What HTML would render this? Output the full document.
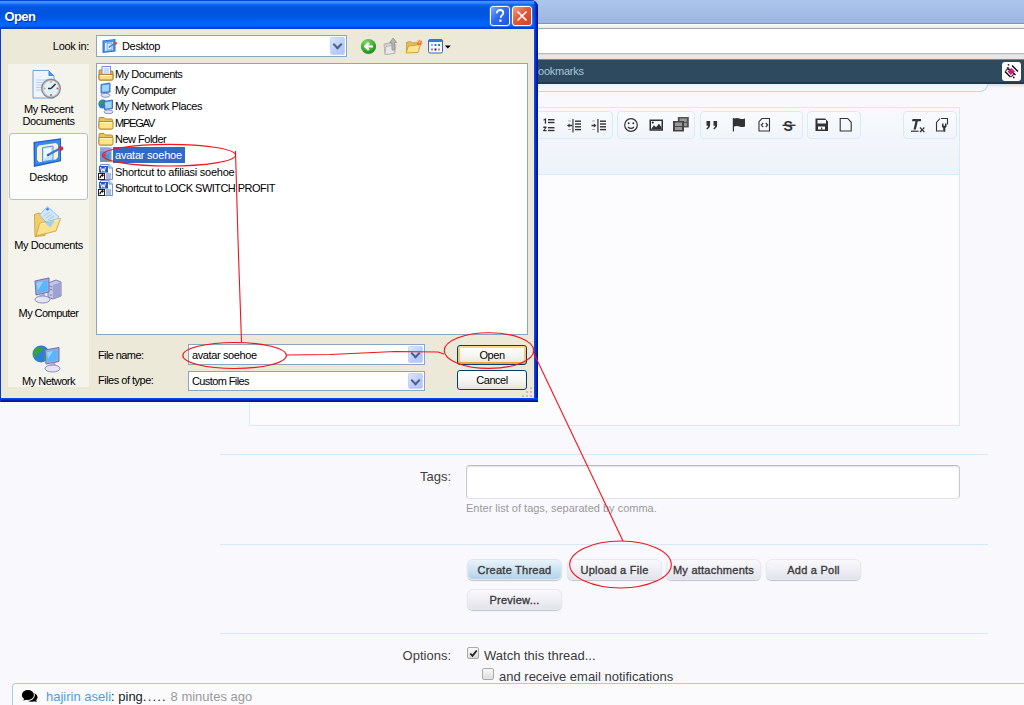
<!DOCTYPE html>
<html><head><meta charset="utf-8">
<style>
*{box-sizing:border-box;margin:0;padding:0}
html,body{width:1024px;height:705px;overflow:hidden;background:#f9f9fd;font-family:"Liberation Sans",sans-serif;position:relative}
.a{position:absolute}
/* web page */
#topblue{left:0;top:0;width:1024px;height:24px;background:linear-gradient(#adc6ec,#9cb6e0);border-bottom:1px solid #7e96bf}
#bar1{left:0;top:24px;width:1024px;height:5px;background:linear-gradient(#fdfdfd,#eaeaea);border-bottom:1px solid #a9a9a9}
#bar2{left:0;top:29px;width:1024px;height:24px;background:#fff}
#bar3{left:0;top:53px;width:1024px;height:6px;background:linear-gradient(#d6d6d6,#e9e9e9 30%,#e4e4e4);border-top:1px solid #bdbdbd}
#nav{left:0;top:59px;width:1024px;height:25px;background:#2d4a5f;border-top:1px solid #5b8cae;border-bottom:2px solid #1f3a4e}
#nav span{position:absolute;left:531px;top:5px;font-size:11px;letter-spacing:-0.25px;color:#a9c6dc}
#navicon{left:1002px;top:62px;width:19px;height:19px;background:#fff;border-radius:3px}
#navshadow{left:0;top:84px;width:1024px;height:4px;background:linear-gradient(#d9dde2,#f9f9fd)}
#panel{left:-20px;top:84px;width:1008px;height:8px;border:1px solid #bcd6ea;border-top:none;border-radius:0 0 9px 9px;background:linear-gradient(#eef0f3,#fbfbfd)}
#editor{left:249px;top:107px;width:711px;height:319px;border:1px solid #d8e9f7;background:#fcfcfe}
#toolbar{left:0;top:0;width:709px;height:67px;background:linear-gradient(#f7f9fd,#edf3fa);border-bottom:1px solid #d8e9f7}
.grp{position:absolute;top:3px;height:28px;border:1px solid #dbeaf7;border-radius:4px;background:linear-gradient(#f9fbfe,#f0f5fb)}
.sep{position:absolute;left:220px;width:768px;height:1px;background:#d6e9f8}
.lbl{position:absolute;font-size:13px;color:#404040;text-align:right}
#tags{left:466px;top:465px;width:494px;height:34px;background:#fff;border:1px solid #cbcbce;border-top-color:#bababd;border-bottom-color:#e2e2e6;border-radius:4px;box-shadow:inset 0 1px 2px #e4e4e4}
#hint{left:466px;top:502px;font-size:11px;color:#9a9a9a}
.btn{position:absolute;top:559px;width:95px;height:21px;border-radius:6px;background:linear-gradient(#fafafd,#e3e3ec);box-shadow:0 1px 1px #bfc0cc;border:1px solid #e8e8f0;font-size:11px;font-weight:normal;-webkit-text-stroke:0.35px #3a3a3a;letter-spacing:0.25px;color:#3a3a3a;text-align:center;line-height:19px;padding-top:1px}
.cb{position:absolute;width:12px;height:12px;border:1px solid #a9a9a9;border-radius:2px;background:linear-gradient(#fafafa,#dcdcdc)}
#chat{left:12px;top:683px;width:1020px;height:30px;border:1px solid #a9cbe6;border-right:none;border-radius:4px 0 0 0;background:#fbfbfd}

#dlg{left:0;top:0;width:538px;height:402px;background:#0831d9;border-radius:0 7px 0 0;overflow:hidden}
#title{left:0;top:0;width:538px;height:29px;background:linear-gradient(#0846d6 0px,#0846d6 1px,#3d95ff 1px,#3a90fd 2.5px,#0a62ee 5px,#0056e2 8px,#0053de 15px,#005bec 19px,#0064fa 22px,#0063f6 26px,#0046d2 27.5px,#0040c8 29px)}
#title span{position:absolute;left:4.5px;top:9px;font-size:13px;font-weight:bold;color:#fff;text-shadow:1px 1px 0 #0a2a90;letter-spacing:-0.6px}
.tbtn{position:absolute;top:6px;width:20px;height:20px;border:1px solid #fff;border-radius:3px;box-shadow:0 0 0 0.5px #6b8fd8}
.tbtn svg{position:absolute;left:0;top:0}
#body{left:1px;top:29px;width:533px;height:369px;background:#ece9d8;font-size:11px;color:#000}

.dl{position:absolute;font-size:11px;color:#000;white-space:nowrap;letter-spacing:-0.4px}
.combo{position:absolute;background:#fff;border:1px solid #8aa4c2}
.ddb{position:absolute;width:15px;height:18px;border-radius:2px;background:linear-gradient(135deg,#dfe8fe,#b8ccf8 60%,#b1c6f6);border:1px solid #c3d3fd}
.ddb:after{content:"";position:absolute;left:3px;top:3px;width:5px;height:5px;border-right:2px solid #4d6185;border-bottom:2px solid #4d6185;transform:rotate(45deg)}
#places{left:8px;top:64px;width:81px;height:323px;background:#f4f3ec}
#list{left:96px;top:63px;width:432px;height:272px;background:#fff;border:1px solid #8aa4c2}
.xpbtn{position:absolute;width:70px;height:20px;border:1px solid #003c74;border-radius:3px;background:linear-gradient(#fff,#f4f4f0 60%,#e6e3d8);font-size:11px;text-align:center;line-height:18px;color:#000;letter-spacing:-0.45px}
.li{position:absolute;font-size:11px;line-height:16px;height:16px;white-space:nowrap;letter-spacing:-0.55px;color:#000}
.pl{position:absolute;left:0;width:81px;text-align:center;font-size:11px;line-height:12px;letter-spacing:-0.5px;color:#000;white-space:nowrap}
#places{overflow:hidden}
</style></head><body>
<div id="topblue" class="a"></div>
<div id="bar1" class="a"></div>
<div id="bar2" class="a"></div>
<div id="bar3" class="a"></div>
<div id="nav" class="a"><span>Bookmarks</span></div>
<div id="navicon" class="a"></div>
<div id="navshadow" class="a"></div>
<div id="panel" class="a"></div>

<div id="editor" class="a">
  <div id="toolbar" class="a">
    <div class="grp" style="left:200px;width:163px"></div>
    <div class="grp" style="left:367px;width:78px"></div>
    <div class="grp" style="left:450px;width:103px"></div>
    <div class="grp" style="left:557px;width:54px"></div>
    <div class="grp" style="left:653px;width:54px"></div>
  </div>
</div>


<svg class="a" style="left:0;top:0" width="1024" height="200" viewBox="0 0 1024 200">
 <g fill="#333" stroke="none">
  <!-- numbered list -->
  <path d="M543.5 119.5l1.6-1h1v5.2h-1.3v-3.6l-1.3.6z"/>
  <rect x="548" y="119" width="6.5" height="1.4"/><rect x="548" y="121.8" width="6.5" height="1.4"/>
  <path d="M543.3 126.6h3.2v1.2l-1.8 2.2h1.9v1.3h-3.4v-1.1l1.8-2.3h-1.7z"/>
  <rect x="548" y="127" width="6.5" height="1.4"/><rect x="548" y="129.8" width="6.5" height="1.4"/>
  <!-- outdent -->
  <rect x="572" y="119" width="1.8" height="13.5" fill="#777"/>
  <path d="M567 125.5l2.6-2v1.3h2.4v1.4h-2.4v1.3z"/>
  <rect x="575" y="120.5" width="6" height="1.4"/><rect x="575" y="123.3" width="6" height="1.4"/><rect x="575" y="126.1" width="6" height="1.4"/><rect x="575" y="128.9" width="6" height="1.4"/>
  <rect x="568" y="120.5" width="3" height="1" fill="#aaa"/><rect x="568" y="129" width="3" height="1" fill="#aaa"/>
  <!-- indent -->
  <rect x="597" y="119" width="1.8" height="13.5" fill="#777"/>
  <path d="M596.5 125.5l-2.6-2v1.3h-2.4v1.4h2.4v1.3z"/>
  <rect x="600" y="120.5" width="6" height="1.4"/><rect x="600" y="123.3" width="6" height="1.4"/><rect x="600" y="126.1" width="6" height="1.4"/><rect x="600" y="128.9" width="6" height="1.4"/>
  <rect x="592" y="120.5" width="3" height="1" fill="#aaa"/><rect x="592" y="129" width="3" height="1" fill="#aaa"/>
 </g>
 <g fill="none" stroke="#333">
  <!-- smiley -->
  <circle cx="631" cy="125" r="6.3" stroke-width="1.2"/>
  <path d="M628 127q3 2.8 6 0" stroke-width="1.3"/>
 </g>
 <g fill="#333">
  <circle cx="628.7" cy="123.3" r="1"/><circle cx="633.3" cy="123.3" r="1"/>
  <!-- image -->
  <path d="M649.5 119.5h13.5v11.2h-13.5z M651 121v8.2h10.5V121z" fill-rule="evenodd"/>
  <circle cx="652.8" cy="122.6" r="1.1"/>
  <path d="M651 129.2l3-4 2 2 3-3.5 2.5 3.5v2z"/>
  <!-- media -->
  <rect x="677.8" y="117" width="11" height="10.5" fill="#555"/>
  <rect x="679.8" y="118.5" width="7" height="3.5" fill="#999"/><rect x="679.8" y="123" width="7" height="3" fill="#999"/>
  <rect x="673" y="121" width="11" height="10.5" fill="#444"/>
  <rect x="675" y="122.5" width="7" height="3.5" fill="#999"/><rect x="675" y="127" width="7" height="3" fill="#999"/>
  <!-- quote -->
  <path d="M706.5 121h3.6v3.8q0 3.2-3 4.6l-.8-.9q1.6-1 1.9-2.8h-1.7z"/>
  <path d="M713.5 121h3.6v3.8q0 3.2-3 4.6l-.8-.9q1.6-1 1.9-2.8h-1.7z"/>
  <!-- flag -->
  <rect x="732.8" y="118" width="1.2" height="13.5"/>
  <path d="M734 118.5q3-1 5.5 0t5.5 0v8q-3 1-5.5 0t-5.5 0z"/>
 </g>
 <g fill="none" stroke="#333" stroke-width="1.1">
  <!-- code doc -->
  <path d="M762 118.5h7.5v12.5h-10.5v-9.3z"/>
  <path d="M763.3 123l-2 2 2 2M765.7 123l2 2-2 2"/>
  <!-- new doc -->
  <path d="M840.2 118.5h7.5l3.5 3.8v8.7h-11z"/>
  <!-- wrench doc -->
  <path d="M941 118.5h6.5v6M943 131h-6.5v-8.5l3.5-4"/>
 </g>
 <g fill="#333">
  <!-- strike S -->
  <text x="783.5" y="130.5" font-family="Liberation Sans" font-weight="bold" font-size="14" fill="#333">S</text>
  <rect x="782.5" y="124.6" width="13" height="1.4"/>
  <!-- save -->
  <path d="M815.5 118.5h9.5l3 3v9.5h-12.5z M817.5 120v3.5h8.5V120z M818 126.5v3h7v-3z" fill-rule="evenodd"/>
  <rect x="821" y="127.5" width="1.2" height="2" fill="#333"/>
  <!-- Tx -->
  <path d="M912.5 119h8.5v2.2h-3.2l-2 8.3h-2.3l2-8.3h-3.5z"/>
  <rect x="911" y="130.6" width="7.5" height="1.2"/>
  <path d="M919.5 128l1-.9 1.7 1.8 1.7-1.8.9.9-1.8 1.8 1.8 1.8-.9.9-1.7-1.8-1.7 1.8-1-.9 1.8-1.8z"/>
  <!-- wrench -->
  <path d="M942 123.5h1.5v2.3h1.5v-2.3h1.5v3.3l-1.2 1.2v3.8h-2.1V128l-1.2-1.2z"/>
 </g>
</svg>
<svg class="a" style="left:998px;top:58px" width="26" height="28" viewBox="0 0 26 28"><path d="M9 9.5L13.5 14M14 7.5L20 13.5M7 13.5L12.5 19M11.5 11L17.5 17" stroke="#111" stroke-width="1.5" fill="none"/><path d="M9.5 13.5L13.5 10L17 13.5L12.8 17z" fill="#c8207a"/><path d="M7.5 13L11 9.5M13 19L16.5 15.5" stroke="#6a2a50" stroke-width="1.2"/><circle cx="10.5" cy="6.8" r="0.9" fill="#222"/><circle cx="15.8" cy="19.5" r="0.9" fill="#222"/></svg>
<div class="sep" style="top:454px"></div>
<div class="sep" style="top:544px"></div>
<div class="sep" style="top:633px"></div>

<div class="lbl" style="left:380px;top:469px;width:71px">Tags:</div>
<div id="tags" class="a"></div>
<div id="hint" class="a">Enter list of tags, separated by comma.</div>

<div class="btn" style="left:467px;background:linear-gradient(#e9f3fb,#b4d2ea);border-color:#dce9f4">Create Thread</div>
<div class="btn" style="left:567px">Upload a File</div>
<div class="btn" style="left:666px">My attachments</div>
<div class="btn" style="left:766px">Add a Poll</div>
<div class="btn" style="left:467px;top:589px;height:21px">Preview...</div>

<div class="lbl" style="left:380px;top:648px;width:71px">Options:</div>
<div class="cb" style="left:467px;top:647px"><svg class="a" style="left:0;top:0" width="11" height="11" viewBox="0 0 11 11"><path d="M2.3 5.5l2.2 2.3 4.2-5.3" fill="none" stroke="#222" stroke-width="1.8"/></svg></div>
<div class="a" style="left:484px;top:648px;font-size:13px;color:#3a3a3a">Watch this thread...</div>
<div class="cb" style="left:482px;top:668px"></div>
<div class="a" style="left:499px;top:669px;font-size:13px;color:#3a3a3a">and receive email notifications</div>

<div id="chat" class="a"></div>
<svg class="a" style="left:16px;top:684px" width="30" height="21" viewBox="0 0 30 21"><ellipse cx="15.5" cy="13.2" rx="6" ry="4.6" fill="#000"/><path d="M15 16.5l6 1.5-1.5-3z" fill="#000"/><ellipse cx="11.9" cy="11" rx="7" ry="5.9" fill="#fbfbfd"/><ellipse cx="11.9" cy="11" rx="6" ry="4.9" fill="#000"/><path d="M8.5 14.5L7 16.6 11.5 15.5z" fill="#000"/></svg>
<div class="a" style="left:46px;top:689px;font-size:13px;color:#222"><span style="color:#4d9de6">hajirin aseli</span>: ping<span style="letter-spacing:1.2px">.....</span> <span style="color:#999">8 minutes ago</span></div>

<!-- DIALOG -->
<div id="dlg" class="a">
  <div id="title" class="a"><span>Open</span>
    <div class="tbtn" style="left:490px;background:linear-gradient(135deg,#7aa7ff,#2e6cf2 45%,#1f55e0)"><svg width="18" height="18" viewBox="0 0 18 18"><path d="M5.8 6.2c0-2 1.5-3.2 3.3-3.2s3.2 1.1 3.2 2.9c0 2.2-2.6 2.4-2.6 4.8" fill="none" stroke="#fff" stroke-width="1.8"/><rect x="8.3" y="12.6" width="2.2" height="2.2" fill="#fff"/></svg></div>
    <div class="tbtn" style="left:512px;background:linear-gradient(135deg,#f3a18a,#e2593a 45%,#d2421f)"><svg width="18" height="18" viewBox="0 0 18 18"><path d="M4.5 4.5L13.5 13.5M13.5 4.5L4.5 13.5" stroke="#fff" stroke-width="1.7"/></svg></div>
  </div>
  <div id="body" class="a">
  </div>
  <div class="a" style="left:534px;top:0;width:4px;height:402px;background:linear-gradient(to right,#1650f0,#0a3ee0 25%,#0528c0 50%,#001a9a 75%,#001590)"></div>
  <div class="a" style="left:1px;top:398px;width:537px;height:4px;background:linear-gradient(#1650f0,#0a3ee0 25%,#0528c0 50%,#001a9a 75%,#001590)"></div>
  <div class="a" style="left:0;top:27px;width:1px;height:375px;background:#0a3ad0"></div>
  <div class="dl" style="left:40px;top:40px;width:49px;text-align:right;letter-spacing:-0.3px">Look in:</div>
  <div class="combo" style="left:96px;top:35px;width:251px;height:22px">
    <svg class="a" style="left:5px;top:2px" width="16" height="16" viewBox="0 0 16 16"><path d="M0.5 2.5l13-1.5v12.5l-13 1.5z" fill="#2a6fd6"/><path d="M1.5 3.3l11-1.2v10.6l-11 1.3z" fill="#4a96ee"/><path d="M3 5l8-1v8l-8 1z" fill="#fbf2c8"/><path d="M5 5.5l5-.6v6.8l-5 .6z" fill="#d6ecff" stroke="#3c90e8" stroke-width=".7"/><path d="M7 9l6-3.5" stroke="#3a78d8" stroke-width="1.4"/><path d="M6.5 9.3l1-.7.2.8z" fill="#111"/><circle cx="13.5" cy="5.2" r="1.5" fill="#e0501e"/></svg>
    <div class="dl" style="left:25px;top:4px;letter-spacing:-0.32px">Desktop</div>
    <div class="ddb" style="left:233px;top:1px"></div>
  </div>
  <!-- toolbar icons -->
  <svg class="a" style="left:360px;top:38px" width="17" height="17" viewBox="0 0 17 17"><defs><radialGradient id="gb" cx="40%" cy="30%" r="70%"><stop offset="0" stop-color="#8ee07a"/><stop offset=".6" stop-color="#3fb02e"/><stop offset="1" stop-color="#228a1e"/></radialGradient></defs><circle cx="8.5" cy="8.5" r="7.6" fill="url(#gb)"/><path d="M13 8.5H5.5M8.8 5L5.3 8.5L8.8 12" fill="none" stroke="#fff" stroke-width="2.2"/></svg>
  <svg class="a" style="left:383px;top:37px" width="16" height="18" viewBox="0 0 16 18"><path d="M1 7l5-1 6 1v9l-10 1.5z" fill="#d2d2d0" stroke="#a9a9a6" stroke-width=".8"/><path d="M3 9.5l10-1.5-2 8.5-9 1z" fill="#e8e8e6" stroke="#b0b0ac" stroke-width=".8"/><path d="M9 13V5.5H6.8L10.2 1l3.4 4.5h-2.2V13z" fill="#b8b8b4" stroke="#8e8e8a" stroke-width=".8"/></svg>
  <svg class="a" style="left:405px;top:38px" width="18" height="16" viewBox="0 0 18 16"><path d="M1.5 4.5l3-1 3 1.2h5v9.3h-11z" fill="#e6bd5c" stroke="#c2962e" stroke-width=".8"/><path d="M3.5 8l12-1.5-2.5 8-12 .5z" fill="#fbe48e" stroke="#c2962e" stroke-width=".8"/><path d="M14.5 1.2l.8 1.8 1.9-.6-.9 1.8 1.6 1.1-1.9.4.2 2-1.5-1.3-1.5 1.3.2-2-1.9-.4 1.6-1.1-.9-1.8 1.9.6z" fill="#f0642a"/><circle cx="14.5" cy="4.3" r="1.1" fill="#ffd84a"/></svg>
  <svg class="a" style="left:428px;top:39px" width="25" height="15" viewBox="0 0 25 15"><rect x="0.5" y="0.5" width="14" height="13.5" rx="1.5" fill="#f4f8ff" stroke="#2f6ad0"/><rect x="0.5" y="0.5" width="14" height="2.5" rx="1" fill="#3a78e0"/><rect x="3" y="5" width="2" height="2" fill="#a0a8e0"/><rect x="6.5" y="5" width="2" height="2" fill="#2f80f0"/><rect x="10" y="5" width="2" height="2" fill="#1fa03a"/><rect x="3" y="9.5" width="2" height="2" fill="#f07040"/><rect x="6.5" y="9.5" width="2" height="2" fill="#1a2a8a"/><rect x="10" y="9.5" width="2" height="2" fill="#d09a30"/><path d="M16.8 6.5h6l-3 3z" fill="#000"/></svg>

  <!-- places bar -->
  <div id="places" class="a">
    <div class="a" style="left:1px;top:69px;width:79px;height:67px;background:#fcfcfb;border:1px solid #b3bfcc;border-radius:3px"></div>
    <div class="a" style="left:24px;top:4px"><svg width="32" height="32" viewBox="0 0 32 32"><path d="M1 2.5h15.5l5.5 5.5v22H1z" fill="#eef4fd" stroke="#7f9ad6"/><path d="M16.5 2.5v5.5H22z" fill="#3d8ce8"/><path d="M4 12h14M4 14.5h14M4 17h12M4 19.5h10M4 22h10" stroke="#b6cdef" stroke-width="1.2"/><circle cx="19" cy="20.5" r="10" fill="#8a8c98"/><circle cx="19" cy="20.5" r="8.6" fill="#c9cad2"/><circle cx="19" cy="20.5" r="7.5" fill="#dff2fb"/><path d="M19 20.5l4.5-4.5M19 20.5h-3" stroke="#333" stroke-width="1.6"/><circle cx="19" cy="14" r="1" fill="#f0a040"/><circle cx="25.5" cy="20.5" r="1" fill="#e04a2a"/><circle cx="19" cy="27" r="1" fill="#e04a2a"/><circle cx="12.5" cy="20.5" r="1" fill="#f0a040"/></svg></div>
    <div class="pl" style="top:39px;letter-spacing:-0.38px">My Recent<br>Documents</div>
    <div class="a" style="left:25px;top:73px"><svg width="32" height="32" viewBox="0 0 32 32"><path d="M0.5 5l27.5-3.8v23L0.8 30z" fill="#1f5fd0"/><path d="M2 6l25-3.3v20.5L2.2 28z" fill="#3c8ae8"/><path d="M6 8.5l17-2.4 2 2v12l-2 2.5-17 2.6-2-2.5v-12z" fill="#fbf3cc"/><path d="M9.5 10.5l10.5-1.5v14l-10.5 1.7z" fill="#c8e4fc" stroke="#3c90e8" stroke-width=".9"/><path d="M11 12l7-1v6l-7 5z" fill="#f4fbff"/><path d="M14 18.5l12-6.5" stroke="#3a78d8" stroke-width="2.2"/><path d="M14 18.5l1.5-1.2.3 1.3z" fill="#222"/><circle cx="28" cy="11.5" r="2.3" fill="#d8321e"/></svg></div>
    <div class="pl" style="top:107px;letter-spacing:-0.3px">Desktop</div>
    <div class="a" style="left:24px;top:141px"><svg width="32" height="32" viewBox="0 0 32 32"><path d="M2.5 9.5l4.5-1.5 4 1.5 2 0 0 21-10 1z" fill="#f0ce6a" stroke="#c89a34" stroke-width=".8"/><path d="M15.5 1.5L27 12l-8.5 10L7.5 10z" fill="#d2e6fc" stroke="#8ab6ee" stroke-width=".8"/><path d="M15.5 2.5l2 1.8-2 1.5-1.8-1.6z" fill="#3a8ce8"/><path d="M12 11l6-4M14 13l6-4M16 15l6-4M18 17l4-2.8" stroke="#a8c8f2"/><path d="M7.5 18.5l21-5-4.5 12.5-20 5z" fill="#fbe28e" stroke="#c89a34" stroke-width=".8"/><path d="M8.5 19l19-4.5" stroke="#fffbe0" stroke-width="1.2"/><path d="M12 17.5l6.5 5 4.5-7.5z" fill="#9cd0f8"/></svg></div>
    <div class="pl" style="top:175px;letter-spacing:-0.4px">My Documents</div>
    <div class="a" style="left:23px;top:210px"><svg width="32" height="32" viewBox="0 0 32 32"><path d="M17 9l8-3 5 2v14l-8 3-5-2z" fill="#c4c6e6" stroke="#7b7fb8"/><path d="M22 11l7-2.5v14L22 25z" fill="#9ea2d2"/><path d="M18.5 12l3 1M18.5 15l3 1" stroke="#7b7fb8"/><circle cx="20" cy="21" r=".9" fill="#4ec04a"/><path d="M4 7l14-3v14L5 21z" fill="#a9a9d8" stroke="#6a6eb0"/><path d="M5.5 8.5l11-2.3v10.5L6.5 19z" fill="#5ab6fa"/><path d="M6 9l6-1.5-5 9z" fill="#a8dcff" opacity=".8"/><path d="M9 20h5l1 3H8z" fill="#b0b2d8"/><ellipse cx="11.5" cy="25.5" rx="7.5" ry="3.5" fill="#e4e4f2" stroke="#8a8cc0"/></svg></div>
    <div class="pl" style="top:243px;letter-spacing:-0.55px">My Computer</div>
    <div class="a" style="left:23px;top:278px"><svg width="32" height="32" viewBox="0 0 32 32"><circle cx="10" cy="12" r="8.5" fill="#2e7fd8"/><path d="M3 9c2-4 6-5 8-3s-1 4-3 5-2 4-4 4-2-3-1-6z" fill="#3aa040"/><path d="M12 14c2-1 4 0 4 2s-2 3-3 2z" fill="#3aa040"/><path d="M14 8l14-2.5v14L15 22z" fill="#a9a9d8" stroke="#6a6eb0"/><path d="M15.5 9.5l11-2v10.5L16.5 20z" fill="#5ab6fa"/><path d="M16 10l6-1-5 8z" fill="#a8dcff" opacity=".8"/><path d="M19 21h5l1 3h-7z" fill="#b0b2d8"/><ellipse cx="21.5" cy="26.5" rx="7.5" ry="3.5" fill="#e4e4f2" stroke="#8a8cc0"/></svg></div>
    <div class="pl" style="top:311px">My Network</div>
  </div>
  <!-- list -->
  <div id="list" class="a"></div>
<div class="a" style="left:98px;top:66px;width:16px;height:16px"><svg width="16" height="16" viewBox="0 0 16 16"><path d="M1 5q0-1 1-1h3l1 1h8q1 0 1 1v7q0 1-1 1H2q-1 0-1-1z" fill="#e3b552" stroke="#b08028"/><rect x="4" y="0.5" width="8.5" height="9" fill="#f4f8ff" stroke="#6f95d8"/><path d="M5.5 3h5.5M5.5 5h5.5M5.5 7h5.5" stroke="#9fc0ea"/><path d="M1 8.5h14v4.5q0 1-1 1H2q-1 0-1-1z" fill="#f7dc86" stroke="#b08028"/><path d="M2.5 9.5h11" stroke="#fff"/></svg></div><div class="li" style="left:115px;top:66px;letter-spacing:-0.5px">My Documents</div><div class="a" style="left:98px;top:82px;width:16px;height:16px"><svg width="16" height="16" viewBox="0 0 16 16"><path d="M3 2.5l9-1.5v9l-9 1z" fill="#5aa8f0" stroke="#4a6ab8"/><path d="M4.2 3.5l6.8-1.1v6.6l-6.8.8z" fill="#9ad8ff"/><path d="M6 11h3v1.5H6z" fill="#9aa0c4"/><ellipse cx="7.5" cy="13.3" rx="4.5" ry="2" fill="#e2e2f0" stroke="#8a8cb8"/></svg></div><div class="li" style="left:115px;top:82px;letter-spacing:-0.45px">My Computer</div><div class="a" style="left:98px;top:98px;width:16px;height:16px"><svg width="16" height="16" viewBox="0 0 16 16"><circle cx="4.8" cy="6" r="4.5" fill="#2a7ad6"/><path d="M1.5 5c1-2.5 3-3 4-2s-.5 2-1.5 2.5-1 2-2 2z" fill="#3aa040"/><path d="M6 3.5l8.5-1.5v8.5l-8 1z" fill="#5aa8f0" stroke="#4a6ab8"/><path d="M7.2 4.5l6.2-1v6.2l-6 .8z" fill="#9ad8ff"/><path d="M9 11.5h3v1H9z" fill="#9aa0c4"/><ellipse cx="10.5" cy="13.8" rx="4.5" ry="1.9" fill="#e2e2f0" stroke="#8a8cb8"/></svg></div><div class="li" style="left:115px;top:98px;letter-spacing:-0.42px">My Network Places</div><div class="a" style="left:98px;top:115px;width:16px;height:16px"><svg width="16" height="16" viewBox="0 0 16 16"><path d="M1 3.5q0-1 1-1h4l1.5 1.5h6q1 0 1 1v8q0 1-1 1H2q-1 0-1-1z" fill="#e9c25e" stroke="#b98b2c"/><path d="M1 6.5h14v6.5q0 1-1 1H2q-1 0-1-1z" fill="#fbe58f" stroke="#b98b2c"/><path d="M2 7.5h12" stroke="#fff4c4"/></svg></div><div class="li" style="left:115px;top:115px;letter-spacing:-1.2px">MPEGAV</div><div class="a" style="left:98px;top:131px;width:16px;height:16px"><svg width="16" height="16" viewBox="0 0 16 16"><path d="M1 3.5q0-1 1-1h4l1.5 1.5h6q1 0 1 1v8q0 1-1 1H2q-1 0-1-1z" fill="#e9c25e" stroke="#b98b2c"/><path d="M1 6.5h14v6.5q0 1-1 1H2q-1 0-1-1z" fill="#fbe58f" stroke="#b98b2c"/><path d="M2 7.5h12" stroke="#fff4c4"/></svg></div><div class="li" style="left:115px;top:131px;letter-spacing:-0.5px">New Folder</div><div class="a" style="left:98px;top:147px;width:16px;height:16px"><svg width="16" height="16" viewBox="0 0 16 16"><path d="M2 0.5h8.5l3 3V15H2z" fill="#6f92d8"/><rect x="2" y="0.5" width="11.5" height="4" fill="#8aa8e4"/><path d="M4 8.5L8 5.5v6z" fill="#b84a6a"/><path d="M7 10l4-3.5v6z" fill="#3f9ad0"/><path d="M7 10l4 2.5v1H7z" fill="#4aa070"/></svg></div><div class="li" style="left:113px;top:147px;background:#316ac5;color:#fff;padding:0 3px 0 2px;letter-spacing:-0.22px">avatar soehoe</div><div class="a" style="left:98px;top:164px;width:16px;height:16px"><svg width="16" height="16" viewBox="0 0 16 16"><path d="M2.5 0.5h8.5l3.5 3.5v11.5h-12z" fill="#eef3fc" stroke="#7d93c8"/><path d="M11 0.5v3.5h3.5" fill="#c9d7f2" stroke="#7d93c8"/><rect x="1" y="2" width="9" height="6.5" fill="#2a56b8"/><path d="M2.5 3l1.3 4.5 1.2-3 1.2 3L7.5 3" fill="none" stroke="#fff" stroke-width="1"/><path d="M8 10h5M8 12h5M8 14h5" stroke="#5f82cc"/><rect x="0.5" y="9.5" width="6" height="6" fill="#fff" stroke="#222"/><path d="M2 14.2c0-2 1-3 3-3M3.8 10.3l1.4.9-.9 1.3" fill="none" stroke="#000" stroke-width="1.1"/></svg></div><div class="li" style="left:115px;top:164px;letter-spacing:-0.24px">Shortcut to afiliasi soehoe</div><div class="a" style="left:98px;top:180px;width:16px;height:16px"><svg width="16" height="16" viewBox="0 0 16 16"><path d="M2.5 0.5h8.5l3.5 3.5v11.5h-12z" fill="#eef3fc" stroke="#7d93c8"/><path d="M11 0.5v3.5h3.5" fill="#c9d7f2" stroke="#7d93c8"/><rect x="1" y="2" width="9" height="6.5" fill="#2a56b8"/><path d="M2.5 3l1.3 4.5 1.2-3 1.2 3L7.5 3" fill="none" stroke="#fff" stroke-width="1"/><path d="M8 10h5M8 12h5M8 14h5" stroke="#5f82cc"/><rect x="0.5" y="9.5" width="6" height="6" fill="#fff" stroke="#222"/><path d="M2 14.2c0-2 1-3 3-3M3.8 10.3l1.4.9-.9 1.3" fill="none" stroke="#000" stroke-width="1.1"/></svg></div><div class="li" style="left:115px;top:180px;letter-spacing:-0.54px">Shortcut to LOCK SWITCH PROFIT</div>

  <div class="dl" style="left:98px;top:349px;letter-spacing:-0.6px">File name:</div>
  <div class="dl" style="left:98px;top:374px;letter-spacing:-0.5px">Files of type:</div>
  <div class="combo" style="left:188px;top:344px;width:237px;height:21px">
    <div class="dl" style="left:3px;top:4px;letter-spacing:-0.38px">avatar soehoe</div>
    <div class="ddb" style="left:219px;top:1px;height:17px"></div>
  </div>
  <div class="combo" style="left:188px;top:371px;width:237px;height:20px">
    <div class="dl" style="left:3px;top:3px;letter-spacing:-0.6px">Custom Files</div>
    <div class="ddb" style="left:219px;top:1px;height:16px"></div>
  </div>
  <div class="xpbtn" style="left:457px;top:345px;box-shadow:inset 0 -2px 0 #f0a63a,inset 0 2px 0 #fbd88c,inset 2px 0 0 #f8c870,inset -2px 0 0 #f8c870">Open</div>
  <div class="xpbtn" style="left:457px;top:370px">Cancel</div>
  <svg class="a" style="left:520px;top:385px" width="13" height="13" viewBox="0 0 13 13" fill="#c5c2b0"><rect x="10" y="2" width="2" height="2"/><rect x="6" y="6" width="2" height="2"/><rect x="10" y="6" width="2" height="2"/><rect x="2" y="10" width="2" height="2"/><rect x="6" y="10" width="2" height="2"/><rect x="10" y="10" width="2" height="2"/></svg>

</div>



<svg class="a" style="left:0;top:0" width="1024" height="705" viewBox="0 0 1024 705" fill="none" stroke="#f0141e" stroke-width="1.1">
  <ellipse cx="169" cy="155.2" rx="66.5" ry="10.8"/>
  <path d="M235.5 151 L238 240 L241.5 342"/>
  <ellipse cx="234.6" cy="355.5" rx="51.8" ry="13"/>
  <path d="M286.5 355 L330 354.5 L395 351.5 L438 352 L444 354"/>
  <ellipse cx="489" cy="350.6" rx="44.8" ry="17.8"/>
  <path d="M533 351.5 L623 541"/>
  <ellipse cx="620.5" cy="564.5" rx="50.8" ry="23.5"/>
</svg>
</body></html>
